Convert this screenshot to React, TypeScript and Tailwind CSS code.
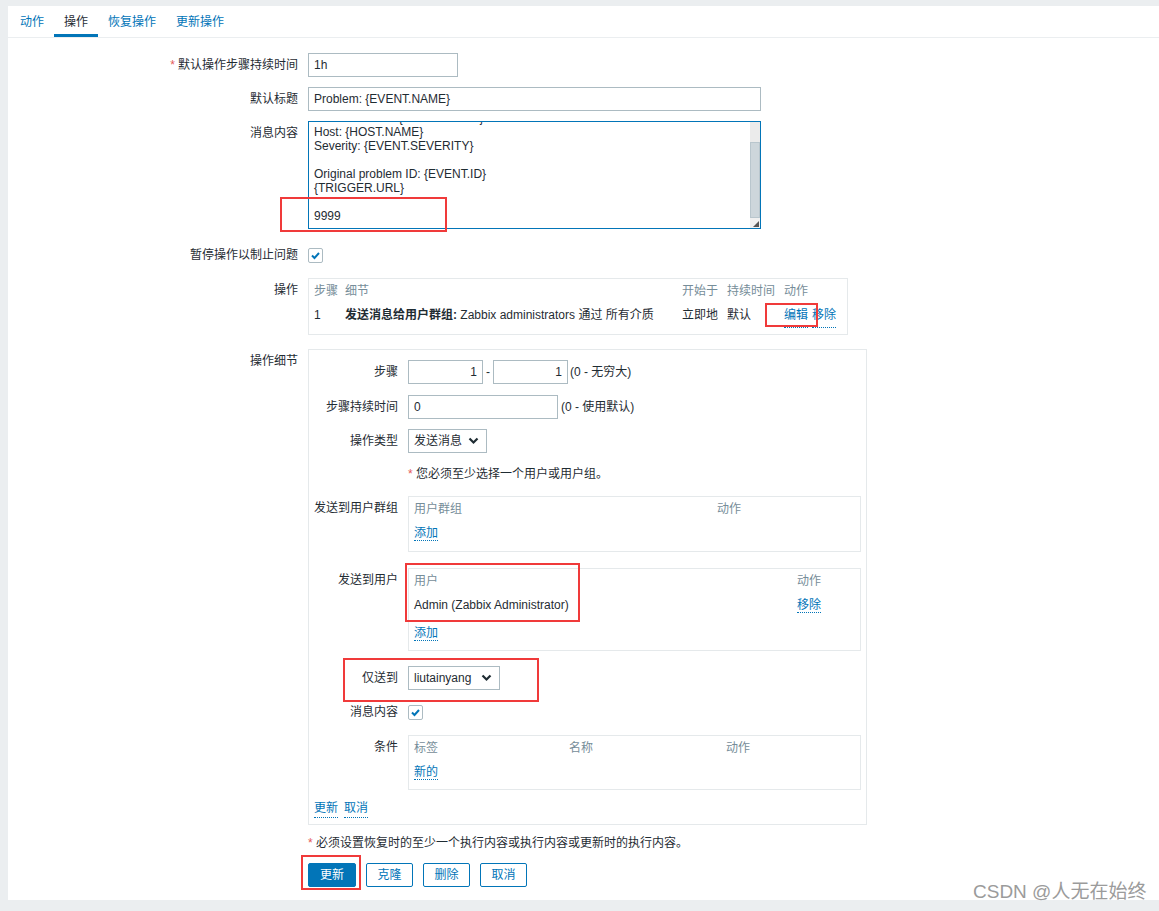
import type { ReactNode } from "react";

const FONT = { fontFamily: '"Liberation Sans", Arial, "Noto Sans CJK SC", sans-serif' };

function Link({ children }: { children: ReactNode }) {
  return (
    <span className="cursor-pointer border-b border-dotted border-[#0275b8] text-[#0275b8]">
      {children}
    </span>
  );
}

function Checkbox() {
  return (
    <span className="flex h-[15px] w-[15px] items-center justify-center rounded-[2px] border border-[#acbbc2] bg-white">
      <svg width="11" height="11" viewBox="0 0 11 11">
        <polyline points="2,5.5 4.5,8 9,3" fill="none" stroke="#0275b8" strokeWidth="2" />
      </svg>
    </span>
  );
}

function Select({ value, width }: { value: string; width: string }) {
  return (
    <div
      className={`flex h-[24px] items-center justify-between border border-[#acbbc2] bg-white pl-[5px] pr-[7px] ${width}`}
    >
      <span>{value}</span>
      <svg width="11" height="8" viewBox="0 0 11 8">
        <polyline points="1.5,1.5 5.5,5.5 9.5,1.5" fill="none" stroke="#1f2c33" strokeWidth="2.2" />
      </svg>
    </div>
  );
}

function Label({ children, required }: { children: ReactNode; required?: boolean }) {
  return (
    <div className="text-right leading-[24px]">
      {required && <span className="mr-[3px] text-[#e45959]">*</span>}
      {children}
    </div>
  );
}

function Annotation({ className }: { className: string }) {
  return <div className={`pointer-events-none absolute border-[2px] border-[#f03a3a] ${className}`} />;
}

const textLines = [
  "Problem name: {EVENT.NAME}",
  "Host: {HOST.NAME}",
  "Severity: {EVENT.SEVERITY}",
  "",
  "Original problem ID: {EVENT.ID}",
  "{TRIGGER.URL}",
  "",
  "9999",
];

export default function App() {
  const tabs = ["动作", "操作", "恢复操作", "更新操作"];
  const input = "h-[24px] border border-[#acbbc2] bg-white px-[5px] leading-[22px]";
  const head = "text-[#768d99]";

  return (
    <div className="min-h-[911px] bg-[#ebeef0] pl-[8px] pt-[6px] text-[12px] text-[#1f2c33]" style={FONT}>
      <div className="relative h-[894px] bg-white">
        {/* tabs */}
        <div className="flex h-[32px] border-b border-[#ebeef0] pl-[2px]">
          {tabs.map((t, i) => (
            <div
              key={t}
              className={`flex h-[31px] items-center px-[10px] ${
                i === 1 ? "border-b-[3px] border-[#0275b8] pt-[3px] text-[#1f2c33]" : "text-[#0275b8]"
              }`}
            >
              {t}
            </div>
          ))}
        </div>

        <div className="grid grid-cols-[290px_1fr] gap-x-[10px] pt-[15px]">
          <Label required>默认操作步骤持续时间</Label>
          <div className={`${input} w-[150px]`}>1h</div>

          <div className="mt-[10px]">
            <Label>默认标题</Label>
          </div>
          <div className={`${input} mt-[10px] w-[453px]`}>Problem: {"{EVENT.NAME}"}</div>

          <div className="mt-[10px]">
            <Label>消息内容</Label>
          </div>
          <div className="mt-[10px] flex h-[108px] w-[453px] border border-[#0275b8] bg-white">
            <div className="flex-1 overflow-hidden pl-[5px]">
              <div className="mt-[-11px] leading-[14px]">
                {textLines.map((l, i) => (
                  <div key={i} className="h-[14px] whitespace-pre">
                    {l}
                  </div>
                ))}
              </div>
            </div>
            <div className="flex w-[10px] flex-col">
              <div className="h-[20px] bg-[#ebebeb]" />
              <div className="h-[76px] border border-[#b9c6cd] bg-[#cdd6db]" />
              <div className="flex flex-1 items-end justify-end bg-[#f0f0f0] pb-[1px] pr-[1px]">
                <svg width="6" height="6" viewBox="0 0 6 6">
                  <path d="M6 0 L6 6 L0 6 Z" fill="#555" />
                </svg>
              </div>
            </div>
          </div>

          <div className="mt-[14px]">
            <Label>暂停操作以制止问题</Label>
          </div>
          <div className="mt-[14px] flex h-[24px] items-center">
            <Checkbox />
          </div>

          <div className="mt-[11px]">
            <Label>操作</Label>
          </div>
          <div className="mt-[11px] w-[540px] border border-[#e5e9eb] pb-[6px] pl-[5px]">
            <div className="grid grid-cols-[31px_337px_45px_57px_1fr] leading-[24px]">
              <div className={head}>步骤</div>
              <div className={head}>细节</div>
              <div className={head}>开始于</div>
              <div className={head}>持续时间</div>
              <div className={head}>动作</div>
              <div>1</div>
              <div>
                <b>发送消息给用户群组:</b> Zabbix administrators 通过 所有介质
              </div>
              <div>立即地</div>
              <div>默认</div>
              <div className="flex gap-[4px]">
                <Link>编辑</Link>
                <Link>移除</Link>
              </div>
            </div>
          </div>

          <div className="mt-[14px]">
            <Label>操作细节</Label>
          </div>
          <div className="mt-[14px] w-[559px] border border-[#e5e9eb] pb-[6px] pl-[5px] pt-[10px]">
            <div className="grid grid-cols-[84px_1fr] gap-x-[10px]">
              <Label>步骤</Label>
              <div className="flex items-center">
                <div className={`${input} w-[75px] text-right`}>1</div>
                <span className="mx-[3px]">-</span>
                <div className={`${input} w-[75px] text-right`}>1</div>
                <span className="ml-[2px]">(0 - 无穷大)</span>
              </div>

              <div className="mt-[11px]">
                <Label>步骤持续时间</Label>
              </div>
              <div className="mt-[11px] flex items-center">
                <div className={`${input} w-[150px]`}>0</div>
                <span className="ml-[3px]">(0 - 使用默认)</span>
              </div>

              <div className="mt-[10px]">
                <Label>操作类型</Label>
              </div>
              <div className="mt-[10px]">
                <Select value="发送消息" width="w-[79px]" />
              </div>

              <div />
              <div className="mt-[12px] leading-[18px]">
                <span className="text-[#e45959]">*</span> 您必须至少选择一个用户或用户组。
              </div>

              <div className="mt-[13px]">
                <Label>发送到用户群组</Label>
              </div>
              <div className="mt-[13px] h-[56px] w-[453px] border border-[#e5e9eb] pl-[5px]">
                <div className="grid grid-cols-[303px_1fr] leading-[24px]">
                  <div className={head}>用户群组</div>
                  <div className={head}>动作</div>
                </div>
                <div className="leading-[24px]">
                  <Link>添加</Link>
                </div>
              </div>

              <div className="mt-[16px]">
                <Label>发送到用户</Label>
              </div>
              <div className="mt-[16px] h-[83px] w-[453px] border border-[#e5e9eb] pl-[5px]">
                <div className="grid grid-cols-[383px_1fr] leading-[24px]">
                  <div className={head}>用户</div>
                  <div className={head}>动作</div>
                  <div>Admin (Zabbix Administrator)</div>
                  <div>
                    <Link>移除</Link>
                  </div>
                </div>
                <div className="mt-[4px] leading-[24px]">
                  <Link>添加</Link>
                </div>
              </div>

              <div className="mt-[15px]">
                <Label>仅送到</Label>
              </div>
              <div className="mt-[15px]">
                <Select value="liutainyang" width="w-[92px]" />
              </div>

              <div className="mt-[10px]">
                <Label>消息内容</Label>
              </div>
              <div className="mt-[10px] flex h-[24px] items-center">
                <Checkbox />
              </div>

              <div className="mt-[11px]">
                <Label>条件</Label>
              </div>
              <div className="mt-[11px] h-[55px] w-[453px] border border-[#e5e9eb] pl-[5px]">
                <div className="grid grid-cols-[155px_157px_1fr] leading-[24px]">
                  <div className={head}>标签</div>
                  <div className={head}>名称</div>
                  <div className={head}>动作</div>
                </div>
                <div className="leading-[24px]">
                  <Link>新的</Link>
                </div>
              </div>

              <div className="col-span-2 mt-[9px] flex gap-[6px] leading-[18px]">
                <Link>更新</Link>
                <Link>取消</Link>
              </div>
            </div>
          </div>

          <div />
          <div className="mt-[9px] leading-[18px]">
            <span className="text-[#e45959]">*</span> 必须设置恢复时的至少一个执行内容或执行内容或更新时的执行内容。
          </div>

          <div />
          <div className="mt-[11px] flex gap-[10px]">
            <button className="h-[24px] w-[48px] rounded-[2px] border border-[#0275b8] bg-[#0275b8] text-white">
              更新
            </button>
            {["克隆", "删除", "取消"].map((b) => (
              <button
                key={b}
                className="h-[24px] w-[47px] rounded-[2px] border border-[#0275b8] bg-white text-[#0275b8]"
              >
                {b}
              </button>
            ))}
          </div>
        </div>

        <Annotation className="left-[272px] top-[191px] h-[35px] w-[167px]" />
        <Annotation className="left-[757px] top-[297px] h-[24px] w-[53px]" />
        <Annotation className="left-[397px] top-[557px] h-[59px] w-[175px]" />
        <Annotation className="left-[335px] top-[652px] h-[44px] w-[196px]" />
        <Annotation className="left-[293px] top-[849px] h-[35px] w-[60px]" />

        <div
          className="absolute left-[965px] top-[872px] text-[19px] text-[#9b9b9b]"
          style={{ fontFamily: '"Liberation Sans", "Noto Sans CJK SC", sans-serif' }}
        >
          CSDN @人无在始终
        </div>
      </div>
    </div>
  );
}
